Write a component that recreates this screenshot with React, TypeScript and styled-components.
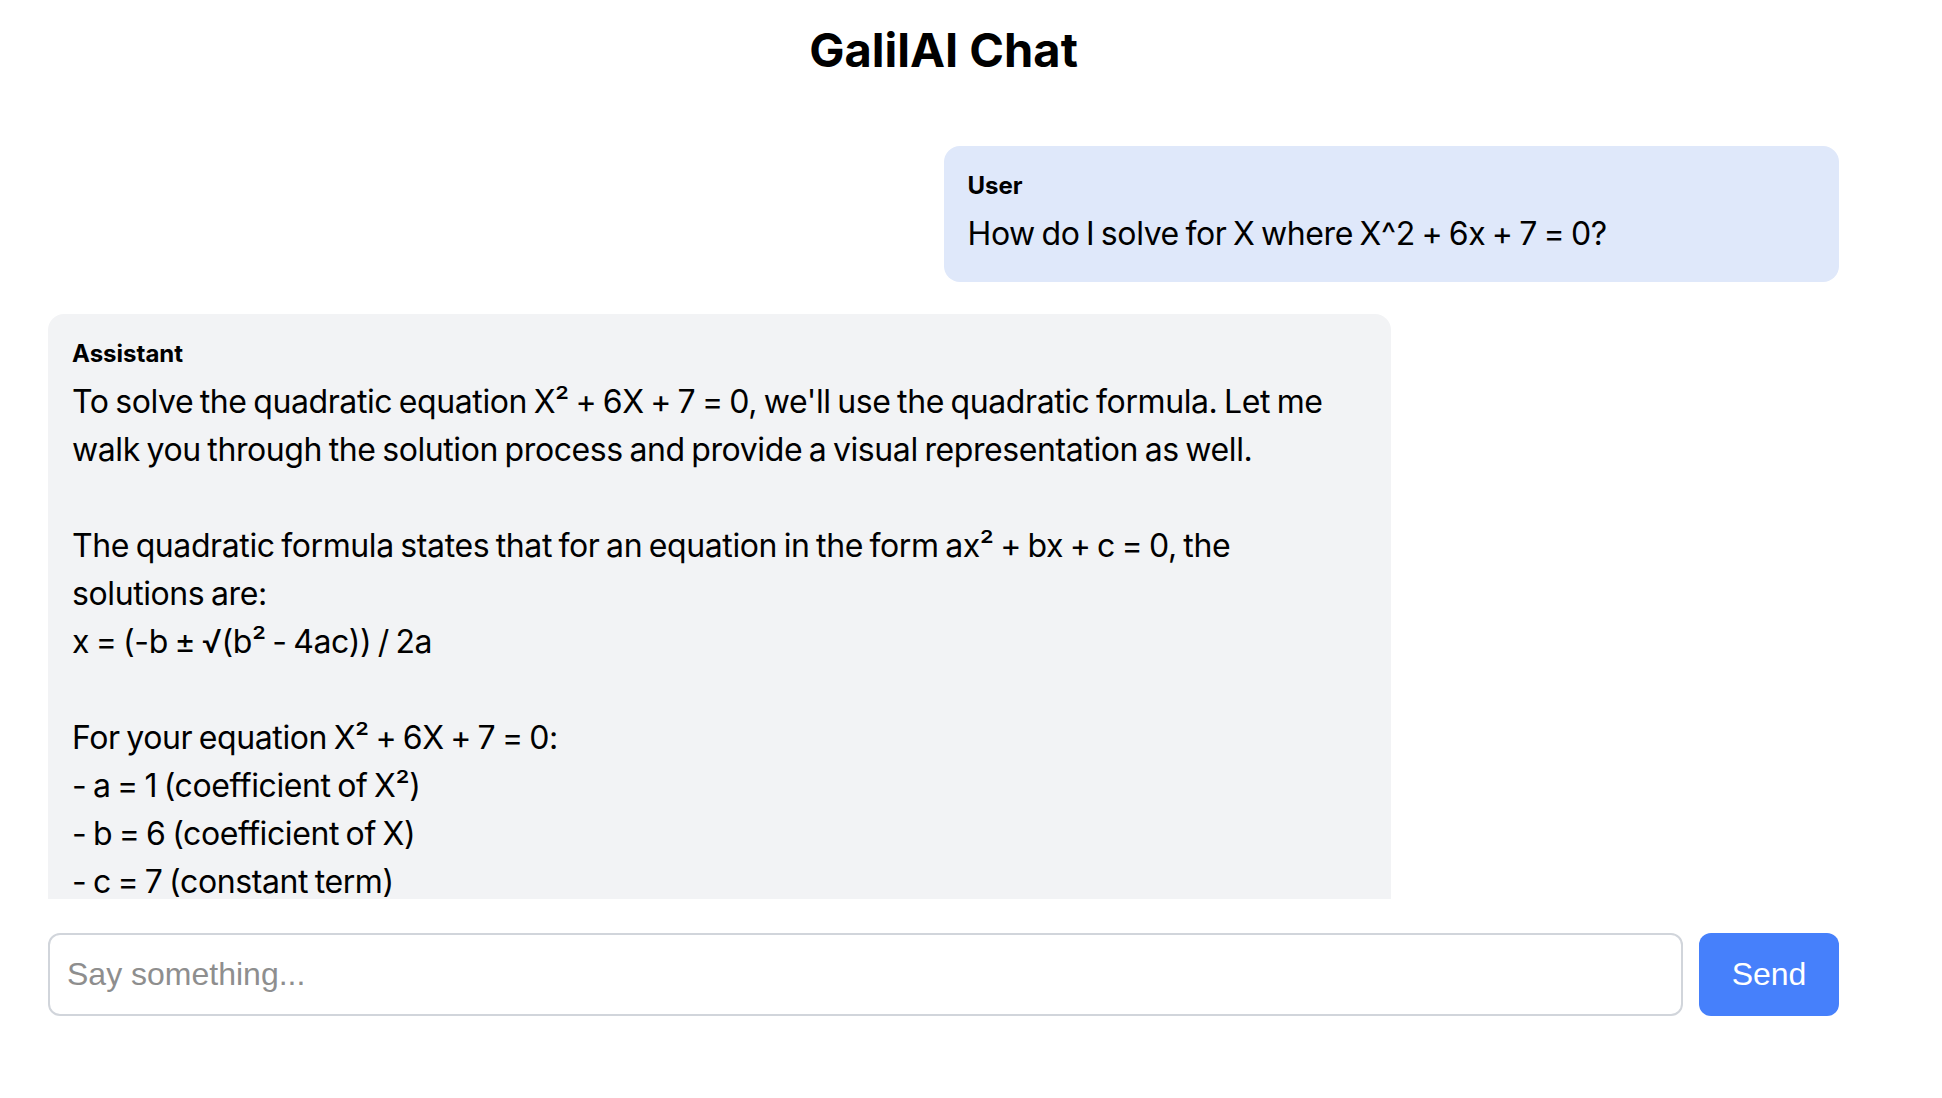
import React from 'react';
import styled, { createGlobalStyle } from 'styled-components';

const GlobalStyle = createGlobalStyle`
  * {
    box-sizing: border-box;
  }
  html, body {
    margin: 0;
    padding: 0;
    background: #fff;
  }
  body {
    font-family: Inter, "Noto Sans", sans-serif;
    color: #000;
  }
`;

const Page = styled.div`
  height: 100vh;
  width: 1791px;
  margin-left: 48px;
  display: flex;
  flex-direction: column;
  padding-bottom: 82px;
`;

const Title = styled.h1`
  margin: 0;
  padding-top: 20px;
  height: 146px;
  text-align: center;
  font-size: 47px;
  line-height: 60px;
  font-weight: 700;
  letter-spacing: 0;
`;

const Messages = styled.div`
  flex: 1;
  min-height: 0;
  overflow-y: auto;
  display: flex;
  flex-direction: column;
  gap: 32px;
  scrollbar-width: none;

  &::-webkit-scrollbar {
    display: none;
  }
`;

const Bubble = styled.div<{ $role: 'user' | 'assistant' }>`
  width: ${(p) => (p.$role === 'user' ? '50%' : '75%')};
  align-self: ${(p) => (p.$role === 'user' ? 'flex-end' : 'flex-start')};
  background: ${(p) => (p.$role === 'user' ? '#dfe8fa' : '#f2f3f5')};
  border-radius: 16px;
  padding: 24px;
  flex-shrink: 0;
`;

const Role = styled.div`
  font-size: 24px;
  line-height: 32px;
  font-weight: 700;
  margin-bottom: 8px;
`;

const Body = styled.div`
  font-size: 32px;
  line-height: 48px;
  white-space: pre-wrap;
  letter-spacing: -0.4px;
  word-spacing: -2px;
`;

const Form = styled.form`
  display: flex;
  gap: 16px;
  margin-top: 34px;
  height: 83px;
  flex-shrink: 0;
`;

const Input = styled.input`
  flex: 1;
  height: 100%;
  border: 2px solid #d1d5db;
  border-radius: 12px;
  padding: 0 17px;
  font-family: "Liberation Sans", Arial, sans-serif;
  font-size: 32px;
  color: #000;
  outline: none;

  &::placeholder {
    color: #8e8e8e;
  }
`;

const SendButton = styled.button`
  width: 140px;
  height: 100%;
  border: none;
  border-radius: 12px;
  background: #4680fb;
  color: #fff;
  font-family: "Liberation Sans", Arial, sans-serif;
  font-size: 32px;
  cursor: pointer;
`;

const messages: { role: 'user' | 'assistant'; label: string; text: string }[] = [
  {
    role: 'user',
    label: 'User',
    text: 'How do I solve for X where X^2 + 6x + 7 = 0?',
  },
  {
    role: 'assistant',
    label: 'Assistant',
    text: `To solve the quadratic equation X² + 6X + 7 = 0, we'll use the quadratic formula. Let me walk you through the solution process and provide a visual representation as well.

The quadratic formula states that for an equation in the form ax² + bx + c = 0, the solutions are:
x = (-b ± √(b² - 4ac)) / 2a

For your equation X² + 6X + 7 = 0:
- a = 1 (coefficient of X²)
- b = 6 (coefficient of X)
- c = 7 (constant term)

Substituting these values:
x = (-6 ± √(6² - 4·1·7)) / 2·1
x = (-6 ± √(36 - 28)) / 2
x = (-6 ± √8) / 2
x = -3 ± √2

So the two solutions are x ≈ -1.586 and x ≈ -4.414.`,
  },
];

function App() {
  return (
    <>
      <GlobalStyle />
      <Page>
        <Title>GalilAI Chat</Title>
        <Messages>
          {messages.map((m, i) => (
            <Bubble key={i} $role={m.role}>
              <Role>{m.label}</Role>
              <Body>{m.text}</Body>
            </Bubble>
          ))}
        </Messages>
        <Form onSubmit={(e) => e.preventDefault()}>
          <Input placeholder="Say something..." />
          <SendButton type="submit">Send</SendButton>
        </Form>
      </Page>
    </>
  );
}

export default App;
